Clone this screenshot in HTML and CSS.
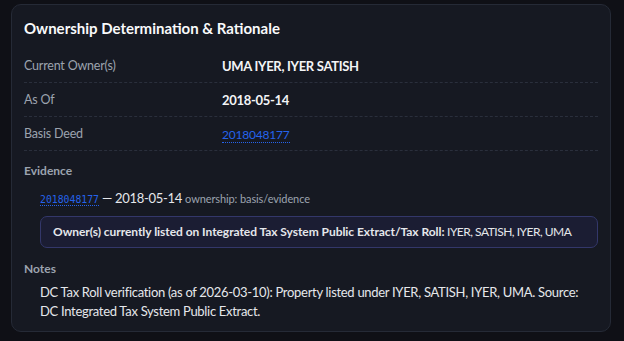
FILE: index.html
```html
<!DOCTYPE html>
<html lang="en">
<head>
    <meta charset="UTF-8">
    <meta name="viewport" content="width=device-width, initial-scale=1.0">
    <title>Ownership Determination</title>
    <link rel="stylesheet" href="styles.css">
</head>
<body>
    <div class="card">
        <h2 class="card-title">Ownership Determination &amp; Rationale</h2>
        <div class="field-row">
            <div class="field-label">Current Owner(s)</div>
            <div class="field-value">UMA IYER, IYER SATISH</div>
        </div>
        <div class="field-row">
            <div class="field-label">As Of</div>
            <div class="field-value">2018-05-14</div>
        </div>
        <div class="field-row">
            <div class="field-label">Basis Deed</div>
            <div class="field-value"><a class="deed-link" href="#">2018048177</a></div>
        </div>

        <div class="section-label">Evidence</div>
        <div class="evidence-item">
            <a class="deed-link mono" href="#">2018048177</a> — 2018-05-14 <span class="evidence-tag">ownership: basis/evidence</span>
        </div>
        <div class="tax-box">
            <strong>Owner(s) currently listed on Integrated Tax System Public Extract/Tax Roll:</strong> IYER, SATISH, IYER, UMA
        </div>

        <div class="section-label notes-label">Notes</div>
        <p class="notes">DC Tax Roll verification (as of 2026-03-10): Property listed under IYER, SATISH, IYER, UMA. Source: DC Integrated Tax System Public Extract.</p>
    </div>
</body>
</html>
```

FILE: styles.css
```css
body {
    margin: 0;
    padding: 4px 13px 10px 11px;
    background-color: #0f1016;
    color: #e5e7eb;
    font-family: Lato, "Noto Sans", Arial, sans-serif;
}
.card {
    background-color: #161922;
    border: 1px solid #252a36;
    border-radius: 10px;
    padding: 12px 12px 10px 12px;
}
.card-title {
    margin: 0 0 10px 0;
    font-size: 15px;
    font-weight: 700;
    color: #f9fafb;
    line-height: 22px;
}
.field-row {
    display: grid;
    grid-template-columns: 198px 1fr;
    align-items: center;
    height: 33px;
    border-bottom: 1px dashed #2a2f3c;
}
.field-label {
    font-size: 12.5px;
    letter-spacing: -0.2px;
    color: #9ca3af;
}
.field-value {
    font-size: 13px;
    font-weight: 700;
    letter-spacing: -0.3px;
    color: #f3f4f6;
}
.deed-link {
    color: #2563eb;
    text-decoration: none;
    border-bottom: 1px dotted #2563eb;
    font-weight: 400;
}
.field-value .deed-link {
    font-size: 12px;
    letter-spacing: -0.2px;
}
.mono {
    font-family: "DejaVu Sans Mono", "Liberation Mono", monospace;
    font-size: 9.8px;
    letter-spacing: 0;
}
.section-label {
    margin-top: 12px;
    font-size: 12px;
    line-height: 16px;
    font-weight: 700;
    color: #9ca3af;
}
.notes-label {
    margin-top: 13px;
}
.evidence-item {
    margin: 9px 0 0 16px;
    font-size: 13px;
    line-height: 20px;
    letter-spacing: -0.3px;
    color: #e5e7eb;
}
.evidence-tag {
    font-size: 11px;
    letter-spacing: -0.1px;
    color: #9ca3af;
}
.tax-box {
    margin: 6px 0 0 16px;
    padding: 8px 12px;
    background-color: #1b1d33;
    border: 1px solid #33376a;
    border-radius: 7px;
    font-size: 12px;
    line-height: 14px;
    letter-spacing: -0.5px;
    color: #e5e7eb;
}
.tax-box strong {
    font-weight: 700;
    letter-spacing: -0.05px;
}
.notes {
    margin: 6px 0 0 16px;
    font-size: 13px;
    line-height: 19px;
    letter-spacing: -0.3px;
    color: #e5e7eb;
}
```
